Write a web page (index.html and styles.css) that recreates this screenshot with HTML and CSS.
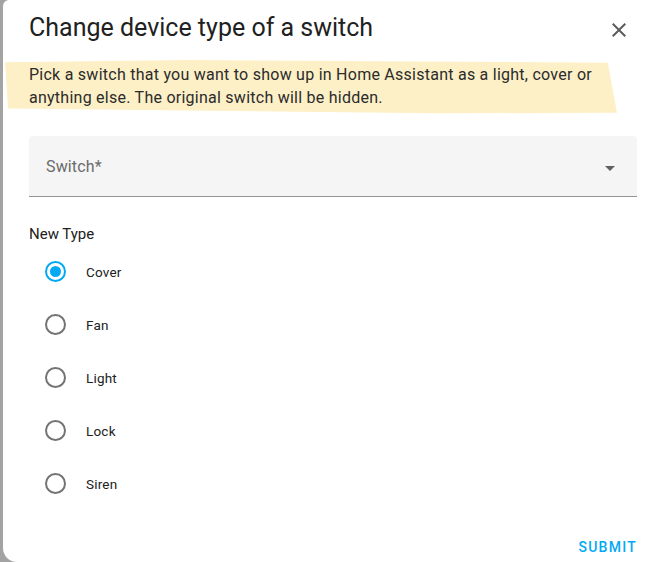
FILE: index.html
```html
<!DOCTYPE html>
<html>
<head>
<meta charset="utf-8">
<link rel="stylesheet" href="styles.css">
</head>
<body>
<div class="dialog">
  <header class="header">
    <h2 class="title">Change device type of a switch</h2>
    <button class="close" aria-label="Close">
      <svg viewBox="0 0 24 24" width="24" height="24"><path d="M19 6.41L17.59 5 12 10.59 6.41 5 5 6.41 10.59 12 5 17.59 6.41 19 12 13.41 17.59 19 19 17.59 13.41 12z"/></svg>
    </button>
  </header>
  <div class="intro">
    <span class="highlight"></span>
    <p class="intro-text">Pick a switch that you want to show up in Home Assistant as a light, cover or anything else. The original switch will be hidden.</p>
  </div>
  <div class="select">
    <span class="select-label">Switch*</span>
    <svg class="arrow" viewBox="7 10 10 5" width="10" height="5"><path d="M7 10l5 5 5-5z"/></svg>
  </div>
  <div class="group-label">New Type</div>
  <div class="radios">
    <label class="radio-row"><span class="radio checked"><span class="dot"></span></span><span class="radio-label">Cover</span></label>
    <label class="radio-row"><span class="radio"></span><span class="radio-label">Fan</span></label>
    <label class="radio-row"><span class="radio"></span><span class="radio-label">Light</span></label>
    <label class="radio-row"><span class="radio"></span><span class="radio-label">Lock</span></label>
    <label class="radio-row"><span class="radio"></span><span class="radio-label">Siren</span></label>
  </div>
  <footer class="actions">
    <button class="submit">Submit</button>
  </footer>
</div>
</body>
</html>
```

FILE: styles.css
```css
* { box-sizing: border-box; }
html, body { margin: 0; padding: 0; }
body {
  width: 651px;
  height: 562px;
  overflow: hidden;
  background: #a3a3a3;
  font-family: Roboto, "Noto Sans", sans-serif;
  color: #212121;
}
.dialog {
  margin-left: 3px;
  height: 562px;
  background: #fff;
  border-radius: 6px 0 0 14px;
  padding: 12px 14px 0 26px;
  display: flex;
  flex-direction: column;
}
.dialog > * { flex-shrink: 0; }
.header {
  display: flex;
  align-items: center;
  justify-content: space-between;
  height: 32px;
}
.title {
  margin: 0;
  font-size: 25px;
  font-weight: 400;
  line-height: 32px;
  color: #212121;
}
.close {
  border: 0;
  background: none;
  padding: 0;
  width: 24px;
  height: 24px;
  margin-right: 6px;
  margin-top: 3px;
  display: flex;
}
.close svg { fill: #5c5c5c; }
.intro {
  position: relative;
  margin-top: 19px;
}
.highlight {
  position: absolute;
  left: -24px;
  top: -3px;
  width: 612px;
  height: 55px;
  background: #fdf0c7;
  clip-path: polygon(0 4%, 30% 0, 98.5% 5%, 100% 96%, 70% 97%, 0.5% 88%);
}
.intro-text {
  position: relative;
  margin: 0;
  max-width: 575px;
  font-size: 16px;
  line-height: 23px;
  letter-spacing: 0.25px;
  color: #2b2b2b;
}
.select {
  margin-top: 27px;
  height: 61px;
  background: #f5f5f5;
  border-radius: 4px 4px 0 0;
  border-bottom: 1px solid #949494;
  display: flex;
  align-items: center;
  justify-content: space-between;
  padding: 0 22px 0 17px;
}
.select-label {
  font-size: 16px;
  color: #6b6b6b;
  letter-spacing: 0.15px;
}
.arrow { fill: #616161; margin-top: 5px; }
.group-label {
  margin-top: 27px;
  font-size: 15px;
  line-height: 20px;
  color: #212121;
}
.radios {
  margin-top: 1px;
  display: flex;
  flex-direction: column;
}
.radio-row {
  height: 53px;
  display: flex;
  align-items: center;
  padding-left: 16px;
}
.radio {
  width: 21px;
  height: 21px;
  border-radius: 50%;
  border: 2px solid #737373;
  display: flex;
  align-items: center;
  justify-content: center;
}
.radio.checked { border-color: #03a9f4; }
.dot {
  width: 11px;
  height: 11px;
  border-radius: 50%;
  background: #03a9f4;
}
.radio-label {
  margin-left: 20px;
  font-size: 13.5px;
  letter-spacing: 0.2px;
  color: #212121;
}
.actions {
  margin-top: 19px;
  display: flex;
  justify-content: flex-end;
  height: 36px;
  align-items: center;
}
.submit {
  border: 0;
  background: none;
  padding: 0;
  font-family: Roboto, sans-serif;
  font-size: 14px;
  font-weight: 500;
  letter-spacing: 1.25px;
  text-transform: uppercase;
  color: #03a9f4;
}
```
